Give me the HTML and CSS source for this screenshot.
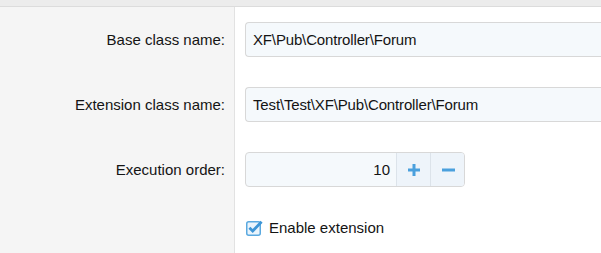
FILE: index.html
```html
<!DOCTYPE html>
<html>
<head>
<meta charset="utf-8">
<link rel="stylesheet" href="styles.css">
</head>
<body>
<div class="topbar"></div>
<div class="form">
  <div class="row">
    <div class="label">Base class name:</div>
    <div class="field"><div class="input">XF\Pub\Controller\Forum</div></div>
  </div>
  <div class="row">
    <div class="label">Extension class name:</div>
    <div class="field"><div class="input">Test\Test\XF\Pub\Controller\Forum</div></div>
  </div>
  <div class="row">
    <div class="label">Execution order:</div>
    <div class="field">
      <div class="spinner">
        <div class="num">10</div>
        <div class="btn"><svg width="12" height="12" viewBox="0 0 12 12"><rect x="0" y="4.5" width="12" height="3" fill="#4aa0dd"/><rect x="4.5" y="0" width="3" height="12" fill="#4aa0dd"/></svg></div>
        <div class="btn last"><svg width="13" height="12" viewBox="0 0 13 12"><rect x="0" y="4.5" width="13" height="3" fill="#4aa0dd"/></svg></div>
      </div>
    </div>
  </div>
  <div class="row check-row">
    <div class="label"></div>
    <div class="field">
      <label class="check">
        <span class="box"><svg width="17" height="17" viewBox="0 0 17 17"><rect x="0.75" y="2.75" width="13.5" height="13.5" rx="2" fill="#eaf4fc" stroke="#5aa9e0" stroke-width="1.5"/><path d="M3.4 8.8 L6.7 12 L15.6 2.8" fill="none" stroke="#3d95d6" stroke-width="2.8" stroke-linecap="butt" stroke-linejoin="miter"/></svg></span>
        <span>Enable extension</span>
      </label>
    </div>
  </div>
</div>
</body>
</html>
```

FILE: styles.css
```css
html, body {
  margin: 0;
  padding: 0;
  height: 100%;
}
body {
  font-family: "Liberation Sans", Arial, sans-serif;
  font-size: 15px;
  color: #141414;
  background: #fff;
  overflow: hidden;
}
.topbar {
  height: 6px;
  background: #ececec;
  border-bottom: 1px solid #dcdcdc;
}
.form {
  display: flex;
  flex-direction: column;
  height: calc(100% - 7px);
  background: linear-gradient(to right, #f5f5f5 0, #f5f5f5 234px, #e2e2e2 234px, #e2e2e2 235px, #fff 235px);
}
.row {
  display: grid;
  grid-template-columns: 235px 1fr;
  height: 65px;
  flex-shrink: 0;
}
.label {
  text-align: right;
  padding: 15px 10px 0 0;
  line-height: 35px;
}
.field {
  padding: 15px 0 0 10px;
}
.input {
  height: 33px;
  line-height: 33px;
  border: 1px solid #d8d8d8;
  border-right: none;
  border-radius: 4px 0 0 4px;
  background: #f5f9fc;
  padding-left: 7px;
  white-space: nowrap;
  letter-spacing: -0.15px;
}
.spinner {
  display: flex;
  width: 218px;
  height: 33px;
  border: 1px solid #d8d8d8;
  border-radius: 4px;
  background: #f5f9fc;
  overflow: hidden;
}
.num {
  width: 144px;
  flex-shrink: 0;
  line-height: 33px;
  text-align: right;
  padding-right: 6px;
}
.btn {
  width: 33px;
  flex-shrink: 0;
  display: flex;
  align-items: center;
  justify-content: center;
  background: #eef4fa;
  border-left: 1px solid #dce3ea;
}
.btn.last {
  width: 34px;
}
.check-row {
  height: auto;
  flex: 1 1 auto;
  min-height: 0;
}
.check-row .field {
  padding-top: 17px;
}
.check {
  display: flex;
  align-items: center;
  gap: 6px;
  padding-left: 1px;
  line-height: 17px;
}
.box {
  display: flex;
  width: 17px;
  height: 17px;
}
```
